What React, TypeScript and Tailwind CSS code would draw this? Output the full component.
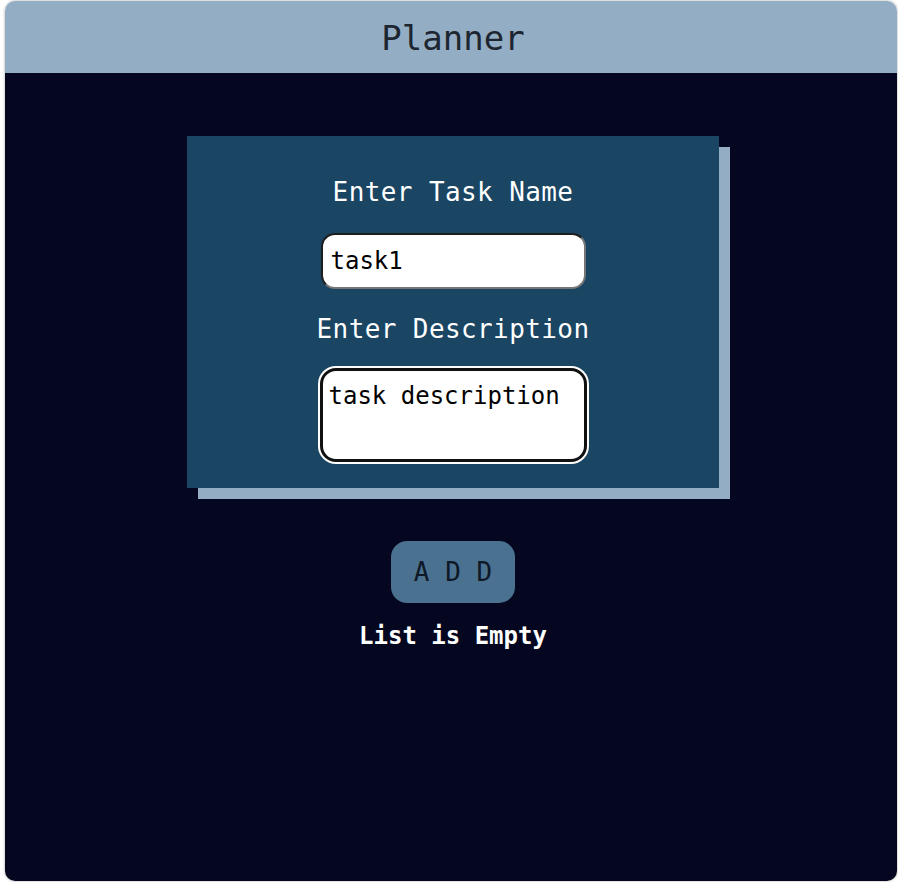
import React, { useState } from "react";

const mono = { fontFamily: '"DejaVu Sans Mono", "Liberation Mono", monospace' };

export default function App() {
  const [name, setName] = useState("task1");
  const [desc, setDesc] = useState("task description");
  const [tasks] = useState<{ name: string; desc: string }[]>([]);

  return (
    <div className="min-h-[882px] bg-white pl-[5px] pt-[1px]" style={mono}>
      <div className="flex h-[880px] w-[892px] flex-col overflow-hidden rounded-[10px] shadow-[0_0_3px_rgba(0,0,0,0.35)]">
        <header className="flex h-[72px] flex-none items-center justify-center bg-[#93aec4] pl-[4px] pt-[1px]">
          <h1 className="text-[34px] leading-none text-[#1c2530]">Planner</h1>
        </header>

        <main className="flex flex-1 flex-col items-center bg-[#050720] pl-[4px] pt-[63px]">
          <div className="flex w-[532px] flex-col items-center bg-[#1a4563] pb-[26px] pt-[40px] shadow-[11px_11px_0_#93aec4]">
            <label className="text-[26px] leading-[32px] tracking-[0.4px] text-white">Enter Task Name</label>
            <input
              value={name}
              onChange={(e) => setName(e.target.value)}
              className="mt-[25px] h-[56px] w-[265px] rounded-[14px] border-2 border-t-[#1e1e1e] border-l-[#1e1e1e] border-r-[#767676] border-b-[#767676] bg-white px-[8px] text-[24px] text-black outline-none"
            />
            <label className="mt-[24px] text-[26px] leading-[32px] tracking-[0.4px] text-white">Enter Description</label>
            <textarea
              value={desc}
              onChange={(e) => setDesc(e.target.value)}
              className="mt-[23px] h-[94px] w-[267px] resize-none rounded-[16px] border-[3px] border-[#111] bg-white pl-[6px] pt-[11px] text-[24px] leading-[28px] text-black outline-none ring-2 ring-white"
            />
          </div>

          <button className="mt-[53px] flex h-[62px] w-[124px] items-center justify-center rounded-[16px] bg-[#4b7190] text-[26px] leading-none text-[#0e1826]">
            A D D
          </button>

          {tasks.length === 0 && (
            <p className="mt-[19px] text-[24px] font-bold leading-[28px] text-white">List is Empty</p>
          )}
        </main>
      </div>
    </div>
  );
}
